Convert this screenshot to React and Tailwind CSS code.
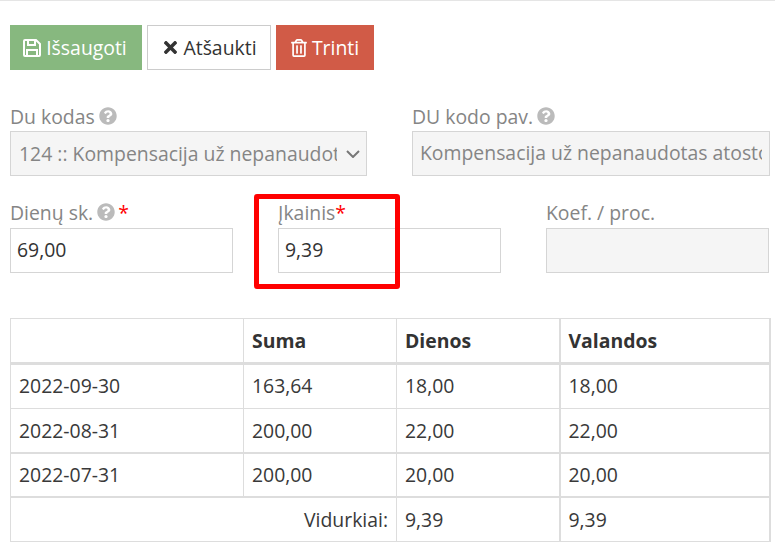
import { FaTimes, FaRegTrashAlt, FaQuestionCircle } from 'react-icons/fa';

const rows = [
  { date: '2022-09-30', sum: '163,64', days: '18,00', hours: '18,00', height: 'h-[45px]', pad: 'pb-px' },
  { date: '2022-08-31', sum: '200,00', days: '22,00', hours: '22,00', height: 'h-[44px]', pad: 'border-b-2' },
  { date: '2022-07-31', sum: '200,00', days: '20,00', hours: '20,00', height: 'h-[44.5px]', pad: 'border-b-2' },
];

const Help = () => <FaQuestionCircle className="inline-block w-[18px] h-[18px] text-[#bbbbbb] ml-[4px] align-[-1px]" />;

const Label = ({ children, tight }) => (
  <label className={`block h-[27px] text-[19.4px] text-[#858585] whitespace-nowrap ${tight ? 'leading-[23px]' : 'leading-[25px]'}`}>{children}</label>
);

// floppy outline, the package's version is too thin and too tall
const SaveIcon = () => (
  <svg viewBox="0 0 18 18" className="w-[18px] h-[18px]" fill="none" stroke="currentColor" strokeWidth="2">
    <path d="M2 1h11l4 4v11a1 1 0 0 1-1 1H2a1 1 0 0 1-1-1V2a1 1 0 0 1 1-1z" />
    <path d="M5 1v5h7V1" />
    <path d="M4 17v-6h10v6" />
  </svg>
);

export default function App() {
  const th = 'border border-[#dddddd] border-b-[3px] px-2 text-left font-bold text-[#333333]';
  const td = 'border border-[#dddddd] px-2 text-[#393939]';

  return (
    <div className="relative w-[775px] h-[551px] bg-white overflow-hidden border-t border-[#e5e5e5] font-['Open_Sans',sans-serif] text-[19.4px]">
      {/* Toolbar */}
      <div className="flex gap-[5px] pl-[10px] pt-[24px]">
        <button className="flex items-center justify-center gap-[5px] w-[132px] h-[45px] pr-[2px] bg-[#87b87f] text-white">
          <SaveIcon />
          Išsaugoti
        </button>
        <button className="flex items-center justify-center gap-[5px] w-[124px] h-[45px] pl-[2px] bg-white border border-[#cccccc] text-[#333333]">
          <FaTimes className="w-[15px] h-[19px]" />
          Atšaukti
        </button>
        <button className="flex items-center justify-center gap-[5px] w-[98px] h-[45px] bg-[#d15b47] text-white">
          <FaRegTrashAlt className="w-[16px] h-[18px]" />
          Trinti
        </button>
      </div>

      {/* First form row */}
      <div className="flex pl-[10px] pt-[34px]">
        <div className="w-[357px]">
          <Label>Du kodas<Help /></Label>
          <div className="flex items-center h-[45px] bg-[#f5f5f5] border border-[#d5d5d5] pl-2 pr-[6px] text-[#858585]">
            <span className="w-[318px] overflow-hidden whitespace-nowrap">124 :: Kompensacija už nepanaudotas atostogas</span>
            <svg viewBox="0 0 14 8" className="ml-auto w-[14px] h-[8px] text-[#777777]" fill="none" stroke="currentColor" strokeWidth="2">
              <polyline points="1,1 7,7 13,1" />
            </svg>
          </div>
        </div>
        <div className="w-[358px] ml-[45px]">
          <Label>DU kodo pav.<Help /></Label>
          <div className="h-[45px] bg-[#f5f5f5] border border-[#d5d5d5] px-[7px] leading-[41px] text-[#858585]">
            <div className="overflow-hidden whitespace-nowrap">Kompensacija už nepanaudotas atostogas</div>
          </div>
        </div>
      </div>

      {/* Second form row */}
      <div className="flex gap-[45px] pl-[10px] pt-[25px]">
        <div className="w-[223px]">
          <Label tight>Dienų sk.<Help /><span className="ml-[3px] text-[#ff0000]">*</span></Label>
          <div className="h-[45px] border border-[#d5d5d5] px-[6px] leading-[41px] text-[#333333]">69,00</div>
        </div>
        <div className="w-[223px]">
          <Label tight>Įkainis<span className="text-[#ff0000]">*</span></Label>
          <div className="h-[45px] border border-[#d5d5d5] px-[6px] leading-[41px] text-[#333333]">9,39</div>
        </div>
        <div className="w-[223px]">
          <Label tight>Koef. / proc.</Label>
          <div className="h-[45px] bg-[#f5f5f5] border border-[#d5d5d5]" />
        </div>
      </div>

      {/* Averages table */}
      <div className="pl-[10px] pt-[45px]">
        <table className="w-[759px] table-fixed border-collapse">
          <colgroup>
            <col className="w-[233px]" />
            <col className="w-[153px]" />
            <col className="w-[163px]" />
            <col className="w-[210px]" />
          </colgroup>
          <thead>
            <tr className="h-[45px]">
              <th className={th}></th>
              <th className={th}>Suma</th>
              <th className={`${th} border-r-2`}>Dienos</th>
              <th className={`${th} border-r-2`}>Valandos</th>
            </tr>
          </thead>
          <tbody>
            {rows.map(r => (
              <tr key={r.date} className={r.height}>
                <td className={`${td} ${r.pad}`}>{r.date}</td>
                <td className={`${td} ${r.pad}`}>{r.sum}</td>
                <td className={`${td} border-r-2 ${r.pad}`}>{r.days}</td>
                <td className={`${td} border-r-2 ${r.pad}`}>{r.hours}</td>
              </tr>
            ))}
            <tr className="h-[44.5px]">
              <td colSpan={2} className={`${td} text-right`}>Vidurkiai:</td>
              <td className={`${td} border-r-2`}>9,39</td>
              <td className={`${td} border-r-2`}>9,39</td>
            </tr>
          </tbody>
        </table>
      </div>

      {/* Red annotation frame */}
      <div className="absolute left-[254px] top-[193px] w-[146px] h-[95px] border-[5px] border-[#ff0000] rounded-[3px]" />
    </div>
  );
}
